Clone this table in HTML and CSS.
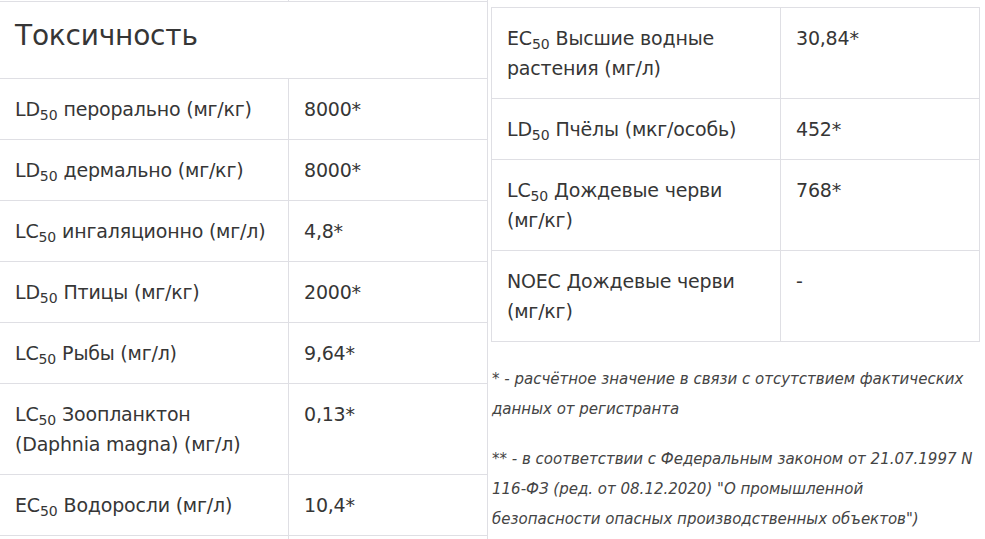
FILE: index.html
```html
<!DOCTYPE html>
<html lang="ru">
<head>
<meta charset="utf-8">
<title>Токсичность</title>
<link rel="stylesheet" href="styles.css">
</head>
<body>
<div class="page">
  <section class="col col-left">
    <div class="tbl tbl-left">
      <div class="row row-stub"><div class="c1"></div><div class="c2"></div></div>
      <div class="row row-head"><h2 class="head">Токсичность</h2></div>
      <div class="row"><div class="c1">LD<sub>50</sub> перорально (мг/кг)</div><div class="c2">8000*</div></div>
      <div class="row"><div class="c1">LD<sub>50</sub> дермально (мг/кг)</div><div class="c2">8000*</div></div>
      <div class="row"><div class="c1">LC<sub>50</sub> ингаляционно (мг/л)</div><div class="c2">4,8*</div></div>
      <div class="row"><div class="c1">LD<sub>50</sub> Птицы (мг/кг)</div><div class="c2">2000*</div></div>
      <div class="row"><div class="c1">LC<sub>50</sub> Рыбы (мг/л)</div><div class="c2">9,64*</div></div>
      <div class="row"><div class="c1">LC<sub>50</sub> Зоопланктон (Daphnia magna) (мг/л)</div><div class="c2">0,13*</div></div>
      <div class="row"><div class="c1">EC<sub>50</sub> Водоросли (мг/л)</div><div class="c2">10,4*</div></div>
      <div class="row"><div class="c1"></div><div class="c2"></div></div>
    </div>
  </section>
  <section class="col col-right">
    <div class="tbl tbl-right">
      <div class="row row-first"><div class="c1">EC<sub>50</sub> Высшие водные растения (мг/л)</div><div class="c2">30,84*</div></div>
      <div class="row"><div class="c1">LD<sub>50</sub> Пчёлы (мкг/особь)</div><div class="c2">452*</div></div>
      <div class="row"><div class="c1">LC<sub>50</sub> Дождевые черви (мг/кг)</div><div class="c2">768*</div></div>
      <div class="row"><div class="c1">NOEC Дождевые черви (мг/кг)</div><div class="c2">-</div></div>
    </div>
    <div class="notes">
      <p>* - расчётное значение в связи с отсутствием фактических данных от регистранта</p>
      <p>** - в соответствии с Федеральным законом от 21.07.1997 N 116-ФЗ (ред. от 08.12.2020) "О промышленной безопасности опасных производственных объектов")</p>
    </div>
  </section>
</div>
</body>
</html>
```
FILE: styles.css
```css
* { box-sizing: border-box; }
html, body { margin: 0; padding: 0; overflow: hidden; background: #fff; }
body {
  font-family: "DejaVu Sans", sans-serif;
  color: #363636;
  font-size: 19px;
  letter-spacing: -0.2px;
  line-height: 30px;
}
.page {
  display: flex;
  gap: 3px;
  align-items: flex-start;
}
.col-left { width: 488px; }
.col-right { width: 489px; margin-top: 7px; }

.tbl-left { border-right: 1px solid #dfdfe4; }
.tbl-right {
  border-left: 1px solid #dfdfe4;
  border-right: 1px solid #dfdfe4;
  border-bottom: 1px solid #dfdfe4;
}
.row {
  display: grid;
  grid-template-columns: 289px 1fr;
  border-top: 1px solid #dfdfe4;
}
.c1 { padding: 15px; border-right: 1px solid #dfdfe4; }
.c2 { padding: 15px; }
.row-stub { border-top: 0; height: 1px; }
.row-stub .c1, .row-stub .c2 { padding: 0; }
.row-head { display: block; }
.head {
  margin: 0;
  font-weight: normal;
  font-size: 28px;
  letter-spacing: -0.2px;
  line-height: 44px;
  padding: 12px 15px 20px;
}
sub {
  font-size: 14px;
  line-height: 1;
  vertical-align: -4px;
  letter-spacing: 0;
}
.notes { padding-top: 22px; padding-right: 6px; }
.notes p {
  margin: 0 0 20px;
  font-style: italic;
  font-size: 15px;
  letter-spacing: 0;
  line-height: 30px;
  color: #444;
  padding-left: 1px;
}
```
